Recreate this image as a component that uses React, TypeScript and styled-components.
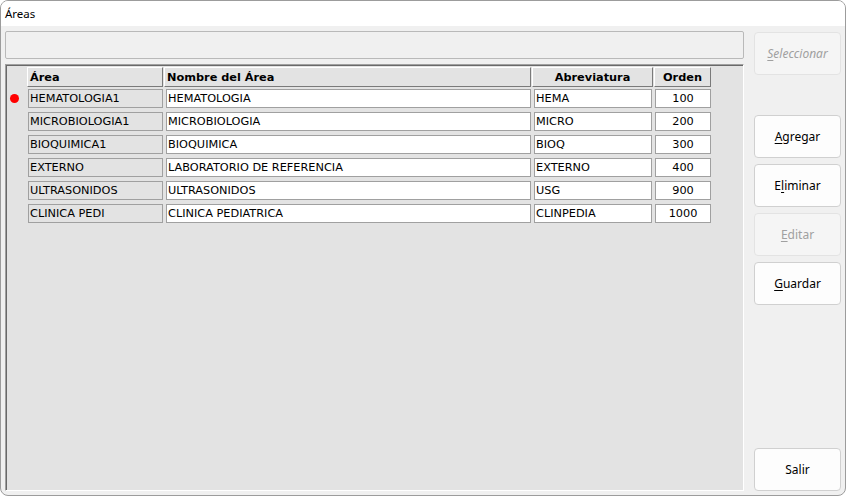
import React from 'react';
import styled, { createGlobalStyle } from 'styled-components';

interface Area {
  area: string;
  nombre: string;
  abreviatura: string;
  orden: number;
}

const areas: Area[] = [
  { area: 'HEMATOLOGIA1', nombre: 'HEMATOLOGIA', abreviatura: 'HEMA', orden: 100 },
  { area: 'MICROBIOLOGIA1', nombre: 'MICROBIOLOGIA', abreviatura: 'MICRO', orden: 200 },
  { area: 'BIOQUIMICA1', nombre: 'BIOQUIMICA', abreviatura: 'BIOQ', orden: 300 },
  { area: 'EXTERNO', nombre: 'LABORATORIO DE REFERENCIA', abreviatura: 'EXTERNO', orden: 400 },
  { area: 'ULTRASONIDOS', nombre: 'ULTRASONIDOS', abreviatura: 'USG', orden: 900 },
  { area: 'CLINICA PEDI', nombre: 'CLINICA PEDIATRICA', abreviatura: 'CLINPEDIA', orden: 1000 },
];

const COLUMNS = '20px 137px 368px 122px 58px';

const GlobalStyle = createGlobalStyle`
  html, body {
    margin: 0;
    padding: 0;
    background: #ffffff;
  }
  * {
    box-sizing: border-box;
  }
`;

const App: React.FC = () => {
  return (
    <>
      <GlobalStyle />
      <Window>
        <TitleBar>Áreas</TitleBar>
        <Body>
          <LeftColumn>
            <FilterPanel />
            <Grid>
              <HeaderRow>
                <span />
                <HeaderCell>Área</HeaderCell>
                <HeaderCell>Nombre del Área</HeaderCell>
                <HeaderCell $center>Abreviatura</HeaderCell>
                <HeaderCell $center>Orden</HeaderCell>
              </HeaderRow>
              {areas.map((a, i) => (
                <DataRow key={a.area}>
                  <Indicator>{i === 0 && <Dot />}</Indicator>
                  <Cell $gray $offset={1} $width={135}>{a.area}</Cell>
                  <Cell $offset={2} $width={365}>{a.nombre}</Cell>
                  <Cell $offset={2} $width={118}>{a.abreviatura}</Cell>
                  <Cell $offset={1} $width={56} $center>{a.orden}</Cell>
                </DataRow>
              ))}
            </Grid>
          </LeftColumn>
          <ButtonColumn>
            <ActionButton disabled $italic>
              <u>S</u>eleccionar
            </ActionButton>
            <ButtonGroup>
              <ActionButton>
                <u>A</u>gregar
              </ActionButton>
              <ActionButton>
                E<u>l</u>iminar
              </ActionButton>
              <ActionButton disabled>
                <u>E</u>ditar
              </ActionButton>
              <ActionButton>
                <u>G</u>uardar
              </ActionButton>
            </ButtonGroup>
            <Spacer />
            <ActionButton>Salir</ActionButton>
          </ButtonColumn>
        </Body>
      </Window>
    </>
  );
};

export default App;

const Window = styled.div`
  width: 846px;
  height: 496px;
  display: flex;
  flex-direction: column;
  border: 1px solid #9c9c9c;
  border-radius: 8px;
  overflow: hidden;
  background: #f0f0f0;
`;

const TitleBar = styled.div`
  height: 25px;
  padding-left: 4px;
  display: flex;
  align-items: center;
  background: #ffffff;
  font-family: 'Noto Sans', 'Open Sans', sans-serif;
  font-size: 11.5px;
  color: #000000;
`;

const Body = styled.div`
  flex: 1;
  display: flex;
  gap: 10px;
  padding: 5px 4px 4px 4px;
`;

const LeftColumn = styled.div`
  width: 739px;
  display: flex;
  flex-direction: column;
  gap: 5px;
`;

const FilterPanel = styled.div`
  height: 28px;
  border: 1px solid #b9b9b9;
  border-radius: 2px;
  background: #f0f0f0;
`;

const Grid = styled.div`
  flex: 1;
  border: 1px solid;
  border-color: #a0a0a0 #ffffff #ffffff #a0a0a0;
  box-shadow: inset 1px 1px 0 #696969;
  background: #e3e3e3;
  padding: 1px 0 0 1px;
  font-family: 'DejaVu Sans', Verdana, sans-serif;
  font-size: 11.3px;
  color: #000000;
`;

const HeaderRow = styled.div`
  display: grid;
  grid-template-columns: ${COLUMNS};
  height: 21px;
  padding-top: 1px;
`;

const HeaderCell = styled.div<{ $center?: boolean }>`
  height: 20px;
  display: flex;
  align-items: center;
  justify-content: ${(p) => (p.$center ? 'center' : 'flex-start')};
  padding-left: ${(p) => (p.$center ? '0' : '2px')};
  margin-right: 1px;
  background: #e3e3e3;
  border: 1px solid;
  border-color: #ffffff #7a7a7a #7a7a7a #ffffff;
  font-weight: bold;
  white-space: nowrap;
`;

const DataRow = styled.div`
  display: grid;
  grid-template-columns: ${COLUMNS};
  height: 23px;
  padding-top: 2px;
`;

const Indicator = styled.div`
  display: flex;
  align-items: center;
  padding-left: 3px;
  height: 19px;
`;

const Dot = styled.span`
  width: 9px;
  height: 9px;
  border-radius: 50%;
  background: #ff0000;
`;

const Cell = styled.div<{ $gray?: boolean; $center?: boolean; $offset: number; $width: number }>`
  width: ${(p) => p.$width}px;
  height: 19px;
  margin-left: ${(p) => p.$offset}px;
  display: flex;
  align-items: center;
  justify-content: ${(p) => (p.$center ? 'center' : 'flex-start')};
  padding-left: ${(p) => (p.$center ? '0' : '1px')};
  background: ${(p) => (p.$gray ? '#e3e3e3' : '#ffffff')};
  border: 1px solid #a0a0a0;
  white-space: nowrap;
  overflow: hidden;
`;

const ButtonColumn = styled.div`
  width: 87px;
  display: flex;
  flex-direction: column;
  padding-top: 1px;
`;

const ButtonGroup = styled.div`
  display: flex;
  flex-direction: column;
  gap: 6px;
  margin-top: 40px;
`;

const Spacer = styled.div`
  flex: 1;
`;

const ActionButton = styled.button<{ $italic?: boolean }>`
  height: 43px;
  width: 87px;
  border: 1px solid #d0d0d0;
  border-radius: 4px;
  background: #fdfdfd;
  font-family: 'Noto Sans', 'Open Sans', sans-serif;
  font-size: 12px;
  font-style: ${(p) => (p.$italic ? 'italic' : 'normal')};
  color: #000000;
  padding: 0;
  cursor: pointer;

  &:disabled {
    background: #f5f5f5;
    border-color: #e3e3e3;
    color: #a0a0a0;
    cursor: default;
  }

  u {
    text-underline-offset: 2px;
  }
`;
